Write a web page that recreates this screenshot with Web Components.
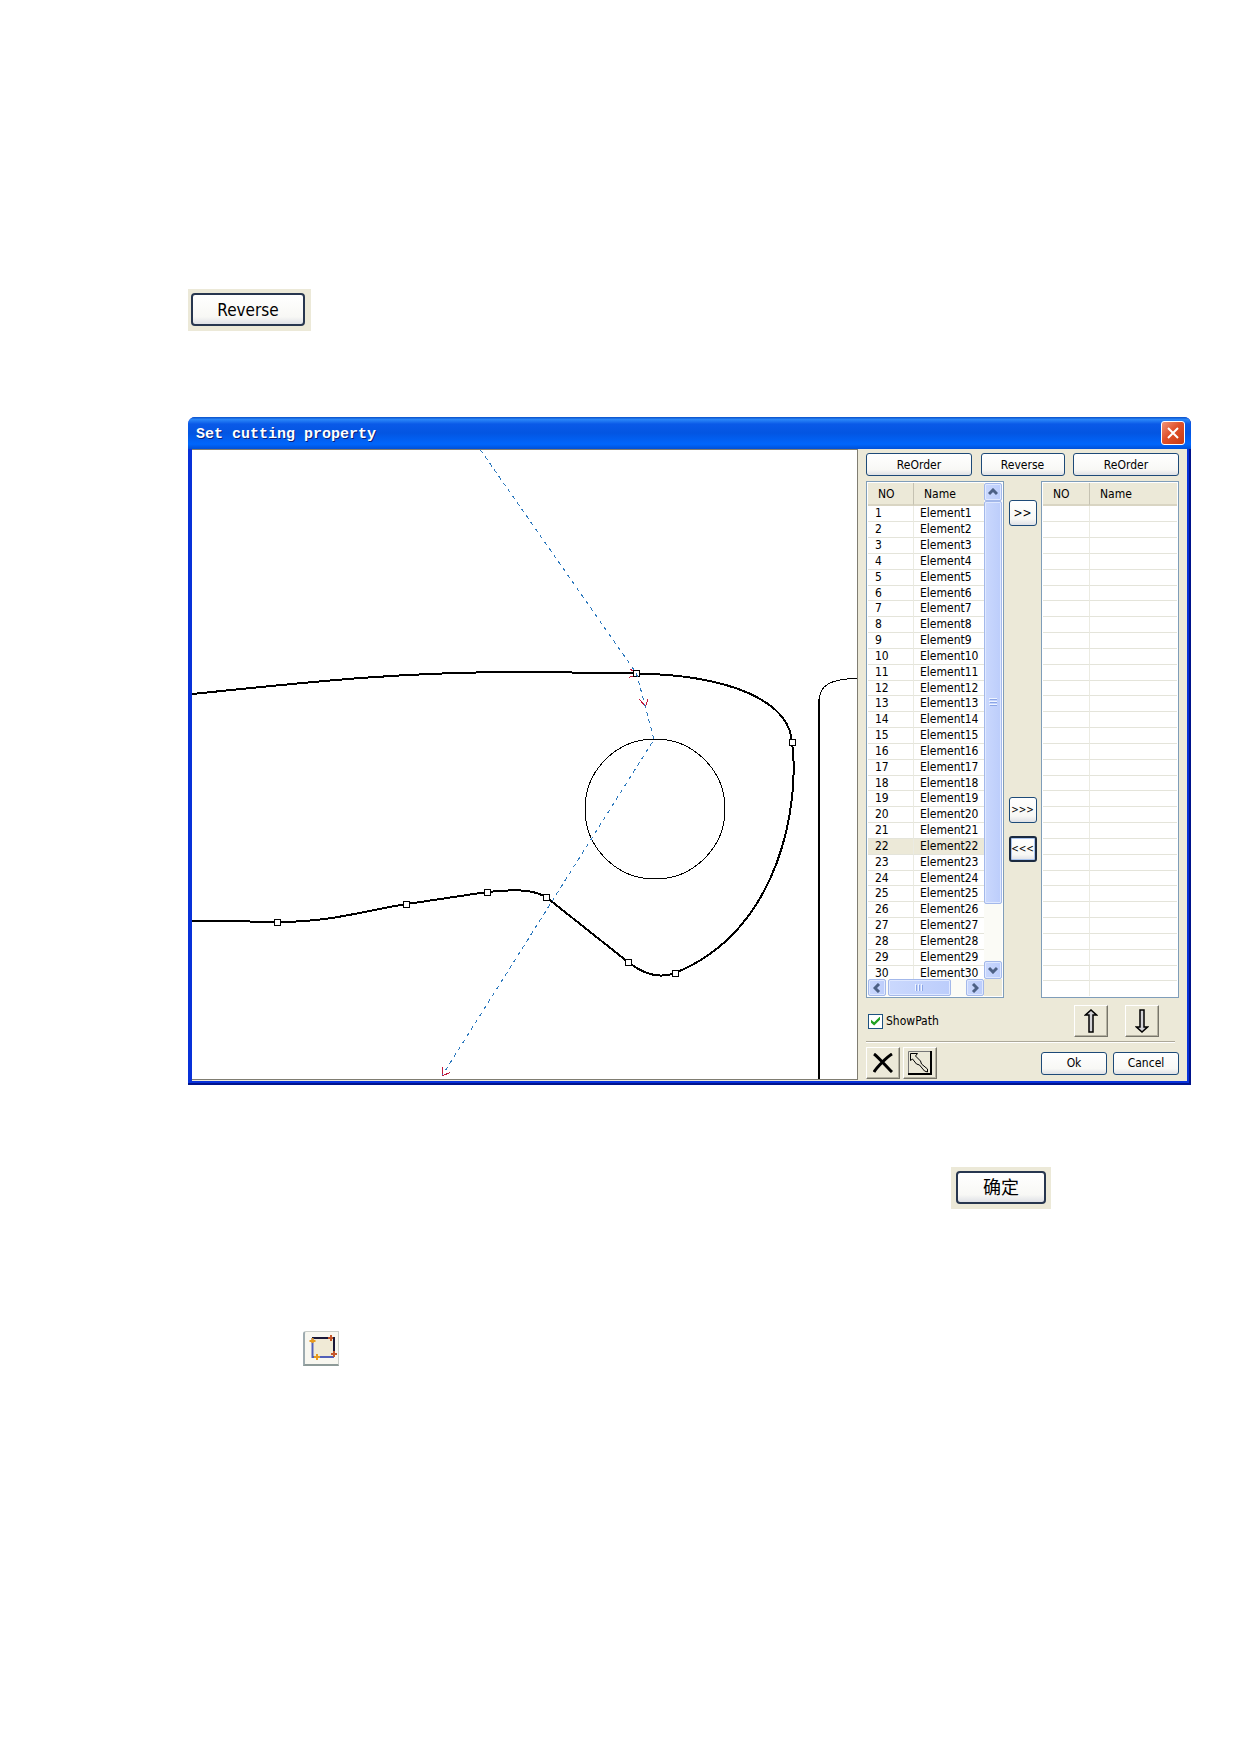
<!DOCTYPE html>
<html lang="en">
<head>
<meta charset="utf-8">
<title>Set cutting property</title>
<style>
body { margin: 0; background: #fff; color: #000; font: 12px/14px "DejaVu Sans Condensed", "DejaVu Sans", "Noto Sans CJK SC", sans-serif; }
</style>
</head>
<body>
<manual-page></manual-page>
<script>
const define = (name, html, setup) => {
  const t = document.createElement('template');
  t.innerHTML = html;
  customElements.define(name, class extends HTMLElement {
    constructor() {
      super();
      this.attachShadow({ mode: 'open' }).append(t.content.cloneNode(true));
    }
    connectedCallback() { if (setup) setup(this, this.shadowRoot); }
  });
};

/* Rounded push button */
define('xp-button', `
<style>
:host { display: block; height: 23px; }
button { box-sizing: border-box; width: 100%; height: 100%; margin: 0; padding: 0; border: 1px solid #1d4a78; border-radius: 3px;
  background: linear-gradient(#fff, #f8f8f5 75%, #dfe1e6); color: #000; font: inherit; text-align: center; white-space: nowrap;
  display: flex; align-items: center; justify-content: center; overflow: hidden; }
:host([strong]) button { border: 2px solid #27364f; border-radius: 4px; }
:host([focused]) button { border: 2px solid #1b2a40; box-shadow: inset 0 0 0 1px #a9c4ee; }
</style>
<button type="button"><slot></slot></button>`);

/* Square raised button that holds an icon */
define('tool-button', `
<style>
:host { display: block; width: 34px; height: 32px; }
button { box-sizing: border-box; width: 100%; height: 100%; margin: 0; padding: 0; border: 1px solid; border-color: #fff #77756a #77756a #fff;
  box-shadow: inset -1px -1px #b5b2a2; background: #ece9d8; display: flex; align-items: center; justify-content: center; }
</style>
<button type="button"><slot></slot></button>`, (h, r) => {
  r.querySelector('button').setAttribute('aria-label', h.getAttribute('label'));
});

/* Beige strip around a single large button */
define('button-strip', `
<style>
:host { display: block; box-sizing: border-box; height: 42px; padding: 4px 6px 0 3px; background: #ece9d8; font-size: 17px; line-height: 20px; }
:host([centered]) { padding: 4px 5px 0; font-size: 18px; }
xp-button { height: 33px; }
</style>
<xp-button strong><slot></slot></xp-button>`);

define('scroll-thumb', `
<style>
:host { display: flex; align-items: center; justify-content: center; box-sizing: border-box; border: 1px solid #a3b8ea; border-radius: 2px;
  background: linear-gradient(90deg, #cad8fd, #bccdfb); box-shadow: inset 0 0 0 1px #dfe8ff; min-width: 0; min-height: 0; }
</style>
<slot></slot>`);

define('v-scroll', `
<style>
:host { display: flex; flex-direction: column; background: #fbfbf6; }
scroll-thumb { height: 18px; }
.grip { height: 403px; margin-bottom: auto; }
svg { display: block; fill: none; stroke: #4d6185; stroke-width: 3; }
.grip svg { stroke: #eef4ff; stroke-width: 1; }
</style>
<scroll-thumb><svg width="10" height="8"><path d="M1 6l4-4 4 4"/></svg></scroll-thumb>
<scroll-thumb class="grip"><svg width="8" height="9"><path d="M0 .5h8M0 3.5h8M0 6.5h8"/><path stroke="#8ba5e6" d="M1 1.5h7M1 4.5h7M1 7.5h7"/></svg></scroll-thumb>
<scroll-thumb><svg width="10" height="8"><path d="M1 2l4 4 4-4"/></svg></scroll-thumb>`);

define('h-scroll', `
<style>
:host { display: flex; background: #fbfbf6; }
scroll-thumb { width: 18px; }
.grip { width: 63px; margin: 0 auto 0 2px; }
svg { display: block; fill: none; stroke: #4d6185; stroke-width: 3; }
.grip svg { stroke: #eef4ff; stroke-width: 1; }
</style>
<scroll-thumb><svg width="8" height="10"><path d="M6 1l-4 4 4 4"/></svg></scroll-thumb>
<scroll-thumb class="grip"><svg width="10" height="7"><path d="M.5 0v7M3.5 0v7M6.5 0v7"/><path stroke="#8ba5e6" d="M1.5 1v6M4.5 1v6M7.5 1v6"/></svg></scroll-thumb>
<scroll-thumb><svg width="8" height="10"><path d="M2 1l4 4-4 4"/></svg></scroll-thumb>`);

/* Two-column list; "count" fills it with elements, "rows" sets how many lines are ruled */
define('element-list', `
<style>
:host { display: grid; grid-template: 1fr / 1fr; box-sizing: border-box; border: 1px solid #7f9db9; padding: 1px; background: #fff; min-width: 0; overflow: hidden; }
:host([scrolls]) { grid-template: minmax(0, 1fr) 17px / minmax(0, 1fr) 18px; }
.view { overflow: hidden; min-height: 0; }
table { width: 100%; border-spacing: 0; table-layout: fixed; }
th, td { box-sizing: border-box; padding: 0; text-align: left; font-weight: normal; white-space: nowrap; }
th { height: 23px; background: #ece9d8; border-bottom: 2px solid #d9d5c3; padding-left: 10px; }
th:first-child { width: 45px; }
th + th { border-left: 1px solid #c5c2b2; }
:host(:not([scrolls])) th:first-child { width: 46px; }
td { height: 16px; line-height: 14px; vertical-align: top; border-bottom: 1px solid #e4e4da; padding-left: 7px; }
tr:nth-child(6n) td { height: 15px; }
td + td { border-left: 1px solid #ebebe2; padding-left: 6px; }
tr.sel td { background: #ece9d8; }
.corner { background: #ece9d8; }
v-scroll, h-scroll, .corner { display: none; }
:host([scrolls]) v-scroll, :host([scrolls]) h-scroll { display: flex; }
:host([scrolls]) .corner { display: block; }
</style>
<div class="view"><table><thead><tr><th scope="col">NO</th><th scope="col">Name</th></tr></thead><tbody></tbody></table></div>
<v-scroll></v-scroll><h-scroll></h-scroll><div class="corner"></div>`, (h, r) => {
  const body = r.querySelector('tbody');
  const rows = +h.getAttribute('rows'), count = +h.getAttribute('count') || 0, sel = +h.getAttribute('selected');
  for (let i = 1; i <= rows; i++) {
    const tr = body.insertRow();
    tr.insertCell().textContent = i <= count ? i : '';
    tr.insertCell().textContent = i <= count ? 'Element' + i : '';
    if (i === sel) tr.className = 'sel';
  }
});

/* Drawing area with the contour, its nodes and the cutting path */
define('cutting-canvas', `
<style>
:host { display: block; box-sizing: border-box; border: 1px solid #807d72; border-left: 0; background: #fff; overflow: hidden; }
svg { display: block; width: 100%; height: 100%; fill: none; stroke: #000; shape-rendering: crispEdges; }
.nodes { fill: #fff; }
.path { stroke: #2c78bd; stroke-dasharray: 4 4; }
.heads { stroke: #c2183c; }
</style>
<svg viewBox="0 0 665 629" preserveAspectRatio="xMinYMin slice" role="img" aria-label="Contour">
<path stroke-width="2" d="M0 244C110 233 200 222 330 222C365 222 400 223 444 223.500C540 225 597 252 600 292C608 350 590 480 483 523C470 528 455 527 436 512L354 447C338 438 318 440 295 442L215 454C170 461 140 472 86 472L0 470.500"/>
<circle cx="463" cy="359" r="70"/>
<path stroke-width="2" d="M627 629V249"/>
<path d="M627.500 249C628 236 637 229 665 228.500"/>
<g class="nodes"><path d="M441.500 220.500h6v6h-6zM597.500 289.500h6v6h-6zM480.500 520.500h6v6h-6zM433.500 509.500h6v6h-6zM351.500 444.500h6v6h-6zM292.500 439.500h6v6h-6zM211.500 451.500h6v6h-6zM82.500 469.500h6v6h-6z"/></g>
<path class="heads" d="M447.500 249.500l6 7 2.500-7.500M250.500 617v8.500l8-3M438 219l3 2M437 227.500l4-1.500"/>
<path class="path" d="M288.500 0L444.500 223.500L462 289.500L250.500 625"/>
</svg>`);

define('property-panel', `
<style>
:host { display: flex; flex-direction: column; box-sizing: border-box; padding: 4px 8px 2px; background: #ece9d8; }
.top, .options, .foot { display: flex; }
.top { justify-content: space-between; }
.wide { width: 106px; }
.mid { width: 84px; }
.lists { display: grid; grid-template-columns: 138px 1fr 138px; height: 517px; margin-top: 5px; }
.move { display: flex; flex-direction: column; align-items: center; padding-top: 19px; }
.move xp-button { width: 28px; height: 26px; }
.move .gap { margin: 271px 0 13px; }
.move .gap, .move .gap + xp-button { font-size: 10px; }
.options { height: 32px; margin-top: 7px; padding-right: 20px; gap: 17px; align-items: center; }
label { display: flex; align-items: center; gap: 3px; margin: 0 auto 0 2px; }
input { appearance: none; box-sizing: border-box; width: 15px; height: 15px; margin: 0; border: 1px solid #1d5280; background: #fff;
  display: grid; place-items: center; }
input:checked::before { content: ""; width: 9px; height: 9px; background: #21a121; clip-path: polygon(0 35%, 35% 65%, 100% 0, 100% 35%, 35% 100%, 0 70%); }
hr { width: 309px; height: 1px; margin: 4px 0; border: 0; border-top: 1px solid #aca899; background: #fff; }
.foot { align-items: center; }
.foot tool-button + tool-button { margin: 0 auto 0 3px; }
.foot xp-button { width: 66px; margin-left: 6px; }
svg { display: block; }
</style>
<div class="top"><xp-button class="wide">ReOrder</xp-button><xp-button class="mid">Reverse</xp-button><xp-button class="wide">ReOrder</xp-button></div>
<div class="lists">
  <element-list scrolls rows="30" count="30" selected="22"></element-list>
  <div class="move"><xp-button>&gt;&gt;</xp-button><xp-button class="gap">&gt;&gt;&gt;</xp-button><xp-button focused>&lt;&lt;&lt;</xp-button></div>
  <element-list rows="31"></element-list>
</div>
<div class="options">
  <label><input type="checkbox" checked>ShowPath</label>
  <tool-button label="Move up"><svg width="14" height="24" fill="#d4d4d8" stroke="#000" stroke-width="1.500"><path d="M5 23V6H1.500L7 1l5.500 5H9v17z"/></svg></tool-button>
  <tool-button label="Move down"><svg width="14" height="24" fill="#d4d4d8" stroke="#000" stroke-width="1.500"><path d="M5 1v17H1.500L7 23l5.500-5H9V1z"/></svg></tool-button>
</div>
<hr>
<div class="foot">
  <tool-button label="Delete"><svg width="20" height="20" fill="none" stroke="#000" stroke-width="3"><path d="M1 1c3 2 14 14 18 18M19 1C14 4 4 14 1 19"/></svg></tool-button>
  <tool-button label="Resize"><svg width="24" height="24" fill="none" stroke="#000"><path stroke="#777" d="M.5 23V.500H23"/><path stroke-width="2" d="M23 0v23H0"/><path fill="#ece9d8" d="M2.500 9.500v-7h7l-2 2.500 5 5 1 3 6 5v3l-3-1-5-6-3-1-4-5z"/></svg></tool-button>
  <xp-button>Ok</xp-button><xp-button>Cancel</xp-button>
</div>`);

define('dialog-window', `
<style>
:host { display: block; border-radius: 7px 7px 0 0; background: #0831d9; overflow: hidden; box-shadow: inset -2px -2px #00138c; }
header { display: flex; align-items: center; justify-content: space-between; height: 32px; padding: 0 6px 0 8px;
  background: linear-gradient(#0a50c8, #2a86f8 8%, #0a5ae8 22%, #0355e2 50%, #0066fc 85%, #0050d8); color: #fff; }
h1 { margin: 0; padding-top: 4px; font: bold 15px/18px "Liberation Mono", monospace; text-shadow: 1px 1px #0a1f7a; }
header button { box-sizing: border-box; width: 24px; height: 24px; padding: 0; border: 1px solid #fff; border-radius: 3px; background: linear-gradient(135deg, #f0957a, #e0512b 45%, #c83a10);
  display: grid; place-items: center; }
header svg { display: block; }
.body { display: grid; grid-template-columns: minmax(0, 1fr) 329px; margin: 0 4px 4px; background: #ece9d8; }
cutting-canvas { margin-bottom: 1px; }
</style>
<header><h1><slot></slot></h1><button type="button" aria-label="Close"><svg width="14" height="14" stroke="#fff" stroke-width="2"><path d="M2 2l10 10M12 2L2 12"/></svg></button></header>
<div class="body"><cutting-canvas></cutting-canvas><property-panel></property-panel></div>`);

define('contour-icon', `
<style>
:host { display: block; box-sizing: border-box; width: 36px; height: 35px; border: 1px solid #c9cdc8; border-left: 2px solid #9eabb0; border-bottom: 2px solid #8d9a98; border-radius: 3px 0 0 0; background: #f8f7f0; }
svg { display: block; }
</style>
<svg width="33" height="32" fill="none" role="img" aria-label="Contour">
<path d="M8.500 6.500h21v18h-21z" fill="#f0ead6"/>
<path d="M7 6h22v19" stroke="#1a1838" stroke-width="2"/><path d="M7.500 6v19H29" stroke="#5260b8" stroke-width="2"/>
<path d="M4.500 9h6M7.500 6v5M12 22v6M9 25h6" stroke="#e79a1e" stroke-width="2"/><path d="M26 3v6M23 6h5M29 19v6M26 22h6" stroke="#c4572c" stroke-width="2"/>
</svg>`);

define('manual-page', `
<style>
:host { display: flex; flex-direction: column; align-items: flex-start; box-sizing: border-box; min-height: 100vh; padding: 289px 49px 0 188px; }
.reverse { width: 123px; }
dialog-window { align-self: stretch; margin: 86px 0 82px; }
.confirm { width: 100px; align-self: flex-end; margin-right: 140px; }
contour-icon { margin: 122px 0 0 115px; }
</style>
<button-strip class="reverse">Reverse</button-strip>
<dialog-window>Set cutting property</dialog-window>
<button-strip class="confirm" centered>确定</button-strip>
<contour-icon></contour-icon>`);
</script>
</body>
</html>
